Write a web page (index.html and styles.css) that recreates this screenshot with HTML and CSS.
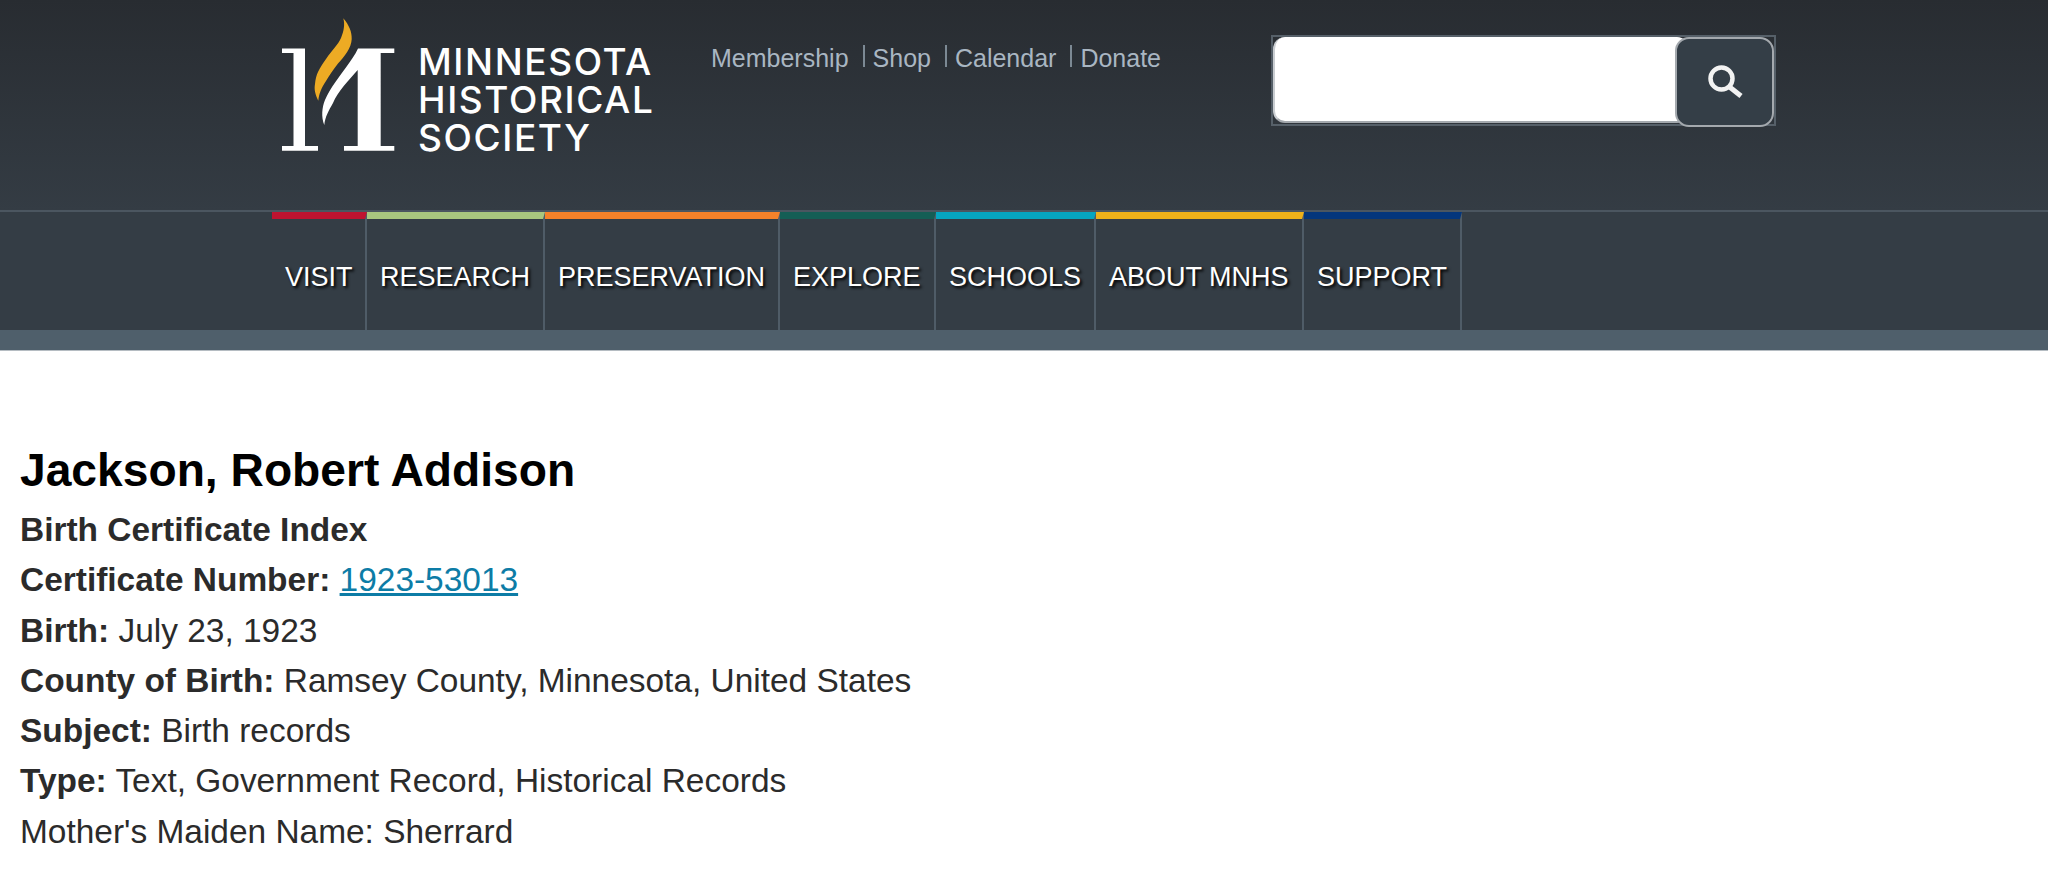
FILE: index.html
```html
<!DOCTYPE html>
<html lang="en">
<head>
<meta charset="utf-8">
<title>Jackson, Robert Addison</title>
<link rel="stylesheet" href="styles.css">
</head>
<body>
<header class="site-header">
  <div class="top">
    <a class="logo" href="#">
      <svg class="mark" width="114" height="138" viewBox="0 0 114 138">
        <path fill="#fff" d="M0 34.5H23V132H36V136.7H0V132H11.5V39H0Z"/>
        <path fill="#fff" d="M76 34.5H112.3V39H98.7V132H112.3V136.7H62V132H75.7V56C67 66 56 77 51 89C47 96 43 103 42.3 111C39 103 40 93 43 86C48 74 58 62 65 52C69 46 73 41 76 34.5Z"/>
        <path fill="#edab24" d="M61.3 4.3C67 11 70 18 69.7 25C69.5 34 62 43 56 49.5C51 56 47 62 44 67C40 73 37 79 36.3 86.7C33 80 32 75 33 70C34 60 37 55 44 45C50 36 56 31 59 24C62 17 63 10 61.3 4.3Z"/>
      </svg>
      <span class="wordmark"><span>MINNESOTA</span><span>HISTORICAL</span><span>SOCIETY</span></span>
    </a>
    <nav class="util">
      <a href="#">Membership</a><a href="#">Shop</a><a href="#">Calendar</a><a href="#">Donate</a>
    </nav>
    <form class="search">
      <input class="search-input" type="text" aria-label="Search">
      <button class="search-btn" type="button" aria-label="Search">
        <svg class="search-icon" width="36" height="34" viewBox="0 0 36 34"><circle cx="14.5" cy="13.5" r="11" fill="none" stroke="#f2f2f2" stroke-width="4.5"/><path d="M22 21.5L34 31" stroke="#f2f2f2" stroke-width="5"/></svg>
      </button>
    </form>
  </div>
  <nav class="main-nav">
    <a class="c1" href="#">VISIT</a>
    <a class="c2" href="#">RESEARCH</a>
    <a class="c3" href="#">PRESERVATION</a>
    <a class="c4" href="#">EXPLORE</a>
    <a class="c5" href="#">SCHOOLS</a>
    <a class="c6" href="#">ABOUT MNHS</a>
    <a class="c7" href="#">SUPPORT</a>
  </nav>
  <div class="sub-bar"></div>
</header>
<main class="record">
  <h1>Jackson, Robert Addison</h1>
  <p><b>Birth Certificate Index</b></p>
  <p><b>Certificate Number:</b> <a href="#">1923-53013</a></p>
  <p><b>Birth:</b> July 23, 1923</p>
  <p><b>County of Birth:</b> Ramsey County, Minnesota, United States</p>
  <p><b>Subject:</b> Birth records</p>
  <p><b>Type:</b> Text, Government Record, Historical Records</p>
  <p>Mother's Maiden Name: Sherrard</p>
</main>
</body>
</html>
```
FILE: styles.css
```css
* { box-sizing: border-box; }
html, body { margin: 0; padding: 0; background: #fff; }
body { font-family: "Liberation Sans", Arial, sans-serif; overflow: hidden; height: 875px; }
.site-header { background: linear-gradient(#282c31, #343c44 211px); }
.top { height: 210px; display: flex; padding-left: 282px; align-items: flex-start; }
.logo { display: flex; align-items: flex-start; padding-top: 14px; text-decoration: none; width: 429px; }
.mark { display: block; margin-right: 22px; flex: none; }
.wordmark { display: flex; flex-direction: column; font-family: Inter, sans-serif; font-weight: 500; font-size: 37px; letter-spacing: 1.6px; line-height: 38px; color: #fff; padding-top: 29px; }
.util { display: flex; padding-top: 43px; font-size: 25px; line-height: 30px; width: 560px; }
.util a { color: #a9b6c2; text-decoration: none; }
.util a + a { margin-left: 14px; padding-left: 10px; background: linear-gradient(#7c8994, #7c8994) left 2px / 2px 22px no-repeat; }
.search { display: flex; align-items: flex-start; margin-top: 35px; width: 505px; height: 91px; border: 2px solid #566069; }
.search-input { flex: 1; min-width: 0; height: 86px; border: 0; border-left: 2px solid #c9cdd1; border-bottom: 2px solid #a4a9ae; border-radius: 12px; background: #fff; margin: 0; padding: 0; }
.search-btn { flex: none; width: 99px; height: 90px; margin-left: -14px; background: #343e47; border: 2px solid #a4a9ae; border-radius: 14px; padding: 0; display: flex; align-items: center; justify-content: center; }
.search-icon { display: block; }
.main-nav { display: flex; height: 120px; padding-left: 272px; border-top: 2px solid #4b5660; background: #343d45; }
.main-nav a { display: block; height: 100%; padding: 39px 13px 0; border-top: 7px solid; border-right: 2px solid #4f5c67; color: #fff; font-size: 27px; line-height: 38px; text-decoration: none; text-shadow: 2px 2px 3px #000; white-space: nowrap; }
.main-nav .c1 { border-top-color: #be1330; width: 95px; }
.main-nav .c2 { border-top-color: #a9c77f; width: 178px; }
.main-nav .c3 { border-top-color: #f5822a; width: 235px; }
.main-nav .c4 { border-top-color: #155e55; width: 156px; }
.main-nav .c5 { border-top-color: #06a5c0; width: 160px; }
.main-nav .c6 { border-top-color: #eeb11a; width: 208px; }
.main-nav .c7 { border-top-color: #04367c; width: 158px; }
.sub-bar { height: 21px; background: #4f5f6b; border-bottom: 1px solid #b5bcc2; }
.record { padding: 94px 0 0 20px; }
h1 { margin: 0 0 10px; font-size: 46.2px; line-height: 50px; color: #000; font-weight: 700; }
p { margin: 0; font-size: 33.45px; line-height: 50.3px; color: #2b2b2b; }
p a { color: #0d7ca6; }
```
